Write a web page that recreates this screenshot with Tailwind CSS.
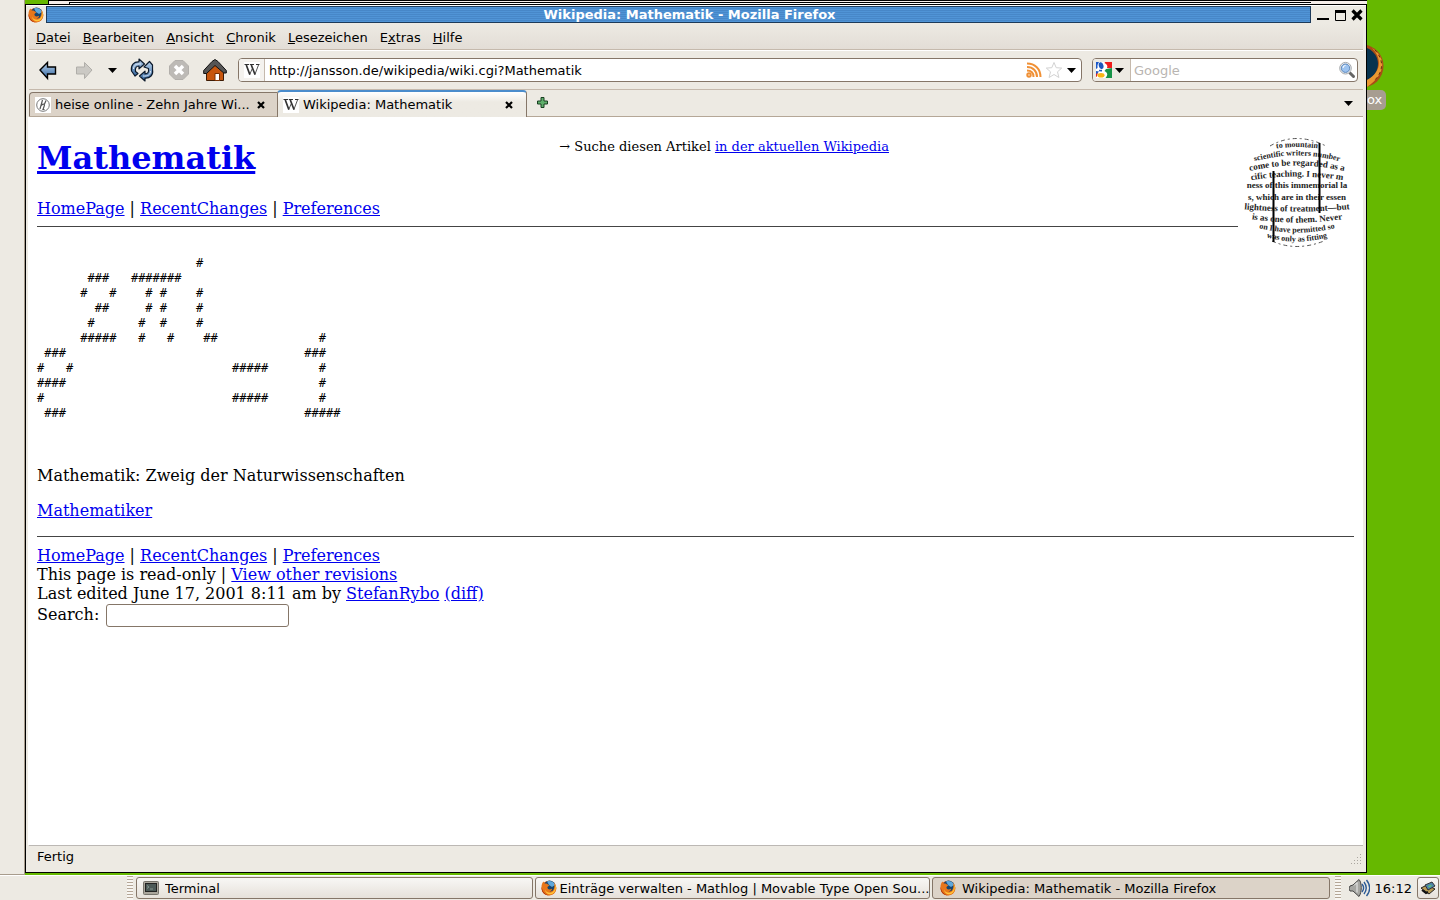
<!DOCTYPE html>
<html lang="de">
<head>
<meta charset="utf-8">
<title>Wikipedia: Mathematik - Mozilla Firefox</title>
<script src="https://cdn.jsdelivr.net/npm/@tailwindcss/browser@4"></script>
</head>
<body class="flex h-screen flex-col overflow-hidden bg-[#66b800] font-['DejaVu_Sans',sans-serif] text-[13px] leading-4 text-black">
<svg class="absolute h-0 w-0" aria-hidden="true">
  <symbol id="firefox" viewBox="0 0 16 16">
    <circle cx="8" cy="8" r="7.3" fill="#d9560f"/>
    <circle cx="8.6" cy="6.2" r="5.6" fill="#17456f"/>
    <path d="M6 1.400C9 .2 13 1.500 14 5L11 7 8 5z" fill="#5fa8dc"/>
    <path d="M1 4C1.500 2.500 2.300 2 2.600 1.600L3.400 3.600C5 3.200 6.500 3.800 7 4.600L8.400 5.300 6.500 7C6 9.500 9 10.200 10.600 8.700C11.600 9 10.800 11 8.500 11.600C12 12 14 8.500 13.300 3.500C15.800 6 16 10 13.500 13C10.500 16.400 4.500 16.200 1.900 12.400C.2 9.800.3 6.500 1 4z" fill="#e8761a"/>
    <path d="M13.300 3.500C14.600 6.500 14 10 11.500 12C9 13.700 5 12.500 4.300 9.500C4 12.500 7 14.600 10 14.200C14.500 13.300 16.300 7 13.300 3.500z" fill="#ffc33b"/>
    <path d="M1 4C.2 8 1.500 13.500 7.500 15.300C4 15.300 1 12.500.6 9z" fill="#a62a0c"/>
  </symbol>
  <symbol id="wiki" viewBox="0 0 16 16">
    <rect width="16" height="16" fill="#fff"/>
    <path d="M.5 2.500h4.700M6 2.500h4M12 2.500h3.500" stroke="#333"/>
    <path d="M5.500 13L8.300 6.500M10.700 13L14.500 3" stroke="#555" fill="none"/>
    <path d="M2.300 3l3.500 9.500M7.300 3l3.700 9.500" stroke="#333" stroke-width="1.700" fill="none"/>
  </symbol>
  <symbol id="down" viewBox="0 0 9 5"><path d="M0 0h9L4.500 5z" fill="#000"/></symbol>
  <symbol id="close" viewBox="0 0 8 8"><path d="M1 1l6 6M7 1L1 7" stroke="#000" stroke-width="2.200"/></symbol>
  <linearGradient id="blue" x1="0" y1="0" x2="0" y2="1"><stop offset="0" stop-color="#b9d2ec"/><stop offset="1" stop-color="#31659f"/></linearGradient>
</svg>

<div class="flex min-h-0 flex-1">
  <div class="w-[25px] shrink-0 border-r border-b border-[#a89c8c] bg-[#edeae3]"></div>

  <div class="mb-[2px] flex min-w-0 flex-1 flex-col">
    <!-- edge of the window behind -->
    <div class="flex h-1 shrink-0">
      <div class="w-[23px]"></div>
      <div class="flex flex-1 border-t border-l border-black bg-[#f6eeea]">
        <div class="mt-px ml-5 flex-1 border-t border-l border-black bg-white"></div>
        <div class="w-14"></div>
      </div>
    </div>

    <main class="flex min-h-0 flex-1 flex-col border border-black bg-[#edeae3]">
      <header class="flex h-[18px] shrink-0 items-center border-t border-white pr-[3px] pl-[2px]">
        <svg class="h-4 w-4 shrink-0"><use href="#firefox"/></svg>
        <div class="ml-[2px] h-[17px] flex-1 border border-[#1d3a5a] bg-[repeating-linear-gradient(#5094d6_0_1px,#4787c8_1px_2px)] pl-[22px] text-center leading-[15px] font-bold text-white">Wikipedia: Mathematik - Mozilla Firefox</div>
        <div class="ml-[6px] flex items-center gap-[5px]">
          <button aria-label="Minimieren"><svg class="block h-3 w-3" viewBox="0 0 12 12"><path d="M0 10h12" stroke="#000" stroke-width="2"/></svg></button>
          <button aria-label="Maximieren"><svg class="block h-3 w-3" viewBox="0 0 12 12"><path d="M1.500 2v9.500h10V2" stroke="#000" fill="none"/><path d="M1 2.500h11" stroke="#000" stroke-width="3"/></svg></button>
          <button aria-label="Schließen"><svg class="block h-3 w-3" viewBox="0 0 12 12"><path d="M1.500 1.500l9 9M10.500 1.500l-9 9" stroke="#000" stroke-width="3.200"/></svg></button>
        </div>
      </header>

      <nav class="mx-[3px] flex h-[27px] shrink-0 items-center gap-3 border-b border-[#c5b9ac] bg-linear-to-b from-[#edeae3] to-[#e3ddd6] pt-1 pl-[7px]">
        <button><u>D</u>atei</button><button><u>B</u>earbeiten</button><button><u>A</u>nsicht</button><button><u>C</u>hronik</button><button><u>L</u>esezeichen</button><button>E<u>x</u>tras</button><button><u>H</u>ilfe</button>
      </nav>

      <div class="mx-[3px] flex h-10 shrink-0 items-center border-t border-b border-t-white border-b-[#c5b9ac] pr-[5px] pl-[7px]">
        <button aria-label="Zurück"><svg class="block h-6 w-6" viewBox="0 0 24 24"><path d="M4 12L11.500 4.500V9h8v7h-8v4.500z" fill="url(#blue)" stroke="#000" stroke-width="1.400"/></svg></button>
        <button class="ml-3" aria-label="Vor"><svg class="block h-6 w-6" viewBox="0 0 24 24"><path d="M20 12L12.500 4.500V9H4.500v7h8v4.500z" fill="#cbc9c4" stroke="#b0aea9"/></svg></button>
        <button class="ml-3" aria-label="Verlauf"><svg class="block h-[5px] w-[9px]"><use href="#down"/></svg></button>
        <button class="ml-[13px]" aria-label="Neu laden"><svg class="block h-6 w-6" viewBox="0 0 24 24"><g fill="url(#blue)" stroke="#0c1a2c" stroke-width="1.200" stroke-linejoin="round"><path d="M1.500 13C.5 7 4 3.500 9 3.800V1l5.500 5L9 10.800V8C6 8 5 10 5.500 13.500L8 15.500 5 18z"/><path d="M22.500 11.500C23.500 17 20 20.500 15 20.200V23l-5.500-5L15 13.200V16C18 16 19 14 18.500 10.500L14 9l5.500-5.500L22.500 7z"/></g><path d="M3.500 11C3.500 7.500 6 5.500 11 6M20.500 13c0 3.500-2.500 5.500-7.500 5" stroke="#dfeaf7" fill="none"/></svg></button>
        <button class="ml-[13px]" aria-label="Stopp"><svg class="block h-6 w-6" viewBox="0 0 24 24"><path d="M8 2.500h8L21.500 8v8L16 21.500H8L2.500 16V8z" fill="#bdbab6" stroke="#b2afab"/><path d="M8 8l8 8M16 8l-8 8" stroke="#fff" stroke-width="3.500"/></svg></button>
        <button class="ml-3" aria-label="Startseite"><svg class="block h-6 w-6" viewBox="0 0 24 24"><path d="M3.500 13L12 6l8.500 7v9.500h-17z" fill="#c7560e" stroke="#3d1b05"/><path d="M.7 12.500L9 3.500l3-2 3 2 8.300 9V15h-2.500L12 7.500 3.500 15.500H.7z" fill="#555" stroke="#111"/><path d="M12 15.500h4.500v7H12z" fill="#fff" stroke="#7a3205"/></svg></button>

        <div class="ml-[11px] flex h-6 min-w-0 flex-1 items-center rounded-[4px] border border-[#857668] bg-white pr-[5px]">
          <span class="flex h-full w-[26px] items-center justify-end rounded-l-[3px] border-r border-[#c5b9ac] bg-[#f4f2ee] pr-1"><svg class="h-4 w-4"><use href="#wiki"/></svg></span>
          <input aria-label="Adresse" class="min-w-0 flex-1 pt-px pl-1 outline-none" value="http://jansson.de/wikipedia/wiki.cgi?Mathematik">
          <svg class="h-4 w-4" viewBox="0 0 16 16" fill="none" stroke="#f09035" stroke-width="2"><circle cx="3" cy="13" r="1.700"/><path d="M1 8.500c4 0 6.500 2.500 6.500 6.500M1 5c6 0 10 4 10 10M1 1.500c8 0 13.500 5.500 13.500 13.500"/></svg>
          <svg class="ml-[3px] h-[18px] w-[18px]" viewBox="0 0 18 18"><path d="M9 1.500l2.200 5.200 5.500.4-4.200 3.700 1.400 5.700L9 13.500l-4.900 3 1.400-5.700L1.300 7.100l5.500-.4z" fill="#fff" stroke="#d2d2d2"/></svg>
          <button class="ml-1" aria-label="Adressliste"><svg class="block h-[5px] w-[9px]"><use href="#down"/></svg></button>
        </div>

        <div class="ml-[10px] flex h-6 w-[266px] items-center rounded-[4px] border border-[#857668] bg-white pr-[1px]">
          <button aria-label="Suchmaschine" class="flex h-full w-[38px] items-center gap-[3px] rounded-l-[3px] border-r border-[#c5b9ac] bg-[#edeae3] pl-[3px]">
            <svg class="h-4 w-4" viewBox="0 0 16 16"><rect width="16" height="16" fill="#fff"/><path d="M9 0h7v6h-5C12 4 11 2 8.500 1z" fill="#ee1c1c"/><path d="M10 7l6-1v10H9.500C12 13 12 11 8.500 9z" fill="#169347"/><path d="M0 0h3L1.500 3v3L0 7zM0 9l3 .5L1 12H0z" fill="#1c58c8"/><path d="M0 12l2-1-1.500 4H0z" fill="#e02020"/><ellipse cx="5.200" cy="3.700" rx="2.300" ry="3.500" transform="rotate(-15 5 4)" fill="#1b57bd"/><path d="M3 8.500l3 .3" stroke="#1b57bd" stroke-width="1.500"/><ellipse cx="5" cy="13.200" rx="3.500" ry="2.300" fill="#f8b415"/></svg>
            <svg class="h-[5px] w-[9px]"><use href="#down"/></svg>
          </button>
          <input aria-label="Suche" placeholder="Google" class="min-w-0 flex-1 pt-px pl-[3px] outline-none placeholder:text-[#b9b5b1]">
          <button aria-label="Suchen"><svg class="block h-[18px] w-[18px]" viewBox="0 0 18 18"><path d="M12 12l3.500 3.500" stroke="#666" stroke-width="3" stroke-linecap="round"/><circle cx="7.500" cy="7.200" r="5.800" fill="#eef1f4" stroke="#a5a8ab"/><circle cx="7.500" cy="7.200" r="4.200" fill="#9cc3f0" stroke="#5d87ba"/><path d="M5 7a2.500 2.500 0 0 1 2.500-2.500" stroke="#fff" fill="none"/></svg></button>
        </div>
      </div>

      <div class="mx-[3px] flex h-[27px] shrink-0 items-end border-b border-[#b5a797]">
        <div class="flex h-6 w-[248px] items-center rounded-tl-[4px] border-t border-l border-[#857668] bg-[#dcd3c8] pt-px pr-3 pl-[5px]">
          <svg class="h-4 w-4" viewBox="0 0 16 16"><rect width="16" height="16" fill="#fff"/><circle cx="8" cy="8" r="6.300" fill="none" stroke="#777"/><path d="M7.500 3L5 12M6.200 8.500c2.300-2 3.800-1.500 3 .5L8 12.500h1.500M11 3.500L9.500 7" stroke="#555" fill="none" stroke-width="1.200"/></svg>
          <button class="ml-1 flex-1 truncate text-left">heise online - Zehn Jahre Wi...</button>
          <button aria-label="Tab schließen"><svg class="block h-2 w-2"><use href="#close"/></svg></button>
        </div>
        <div class="-mb-px flex h-[27px] w-[250px] items-center rounded-t-[4px] border-x border-t-2 border-x-[#857668] border-t-[#4a8ccc] bg-linear-to-b from-white to-[#edeae3] to-40% pr-[13px] pl-[5px]">
          <svg class="h-4 w-4"><use href="#wiki"/></svg>
          <button class="ml-1 flex-1 text-left">Wikipedia: Mathematik</button>
          <button aria-label="Tab schließen"><svg class="block h-2 w-2"><use href="#close"/></svg></button>
        </div>
        <button class="mb-2 ml-[10px]" aria-label="Neuer Tab"><svg class="block h-[11px] w-[11px]" viewBox="0 0 11 11"><path d="M4 .5h3V4h3.500v3H7v3.500H4V7H.5V4H4z" fill="#5fae6b" stroke="#183f20"/></svg></button>
        <button class="mr-[10px] mb-[10px] ml-auto" aria-label="Alle Tabs"><svg class="block h-[5px] w-[9px]"><use href="#down"/></svg></button>
      </div>

      <article class="mr-[3px] ml-[2px] min-h-0 flex-1 overflow-hidden bg-white px-[9px] pt-[18px] font-['DejaVu_Serif',serif] text-[16px] leading-[19px]">
        <div class="flex items-start">
          <div class="min-w-0 flex-1">
            <div class="flex items-start pt-1">
              <h1 class="text-[32px] leading-[38px] font-bold"><a href="#" class="text-[#0000ee] underline">Mathematik</a></h1>
              <p class="ml-[304px] text-[13px] leading-4">→ Suche diesen Artikel <a href="#" class="text-[#0000ee] underline">in der aktuellen Wikipedia</a></p>
            </div>
            <p class="mt-[22px]"><a href="#" class="text-[#0000ee] underline">HomePage</a> | <a href="#" class="text-[#0000ee] underline">RecentChanges</a> | <a href="#" class="text-[#0000ee] underline">Preferences</a></p>
            <hr class="mt-2 border-[#444]">
          </div>
          <svg class="h-[116px] w-[116px] shrink-0" viewBox="0 0 116 116" font-family="Liberation Serif, serif" font-size="9" font-weight="bold" text-anchor="middle" fill="#222">
            <defs>
              <path id="c1" d="M20 17Q59 7 98 17"/><path id="c2" d="M2 31Q59 10 116 31"/><path id="c3" d="M-6 41Q59 20 124 41"/><path id="c4" d="M-6 49Q59 34 124 49"/>
              <path id="c7" d="M-6 73Q59 80 124 73"/><path id="c8" d="M-6 81Q59 94 124 81"/><path id="c9" d="M2 88Q59 107 116 88"/><path id="c10" d="M10 96Q59 117 108 96"/>
            </defs>
            <text font-size="8"><textPath href="#c1" startOffset="50%">to mountain</textPath></text>
            <text font-size="8"><textPath href="#c2" startOffset="50%">scientific writers number</textPath></text>
            <text><textPath href="#c3" startOffset="50%">come to be regarded as a</textPath></text>
            <text><textPath href="#c4" startOffset="50%">cific teaching. I never m</textPath></text>
            <text x="59" y="53">ness of this immemorial la</text>
            <text x="59" y="65">s, which are in their essen</text>
            <text><textPath href="#c7" startOffset="50%">lightness of treatment—but</textPath></text>
            <text><textPath href="#c8" startOffset="50%">is as one of them. Never</textPath></text>
            <text font-size="8"><textPath href="#c9" startOffset="50%">on I have permitted so</textPath></text>
            <text font-size="8"><textPath href="#c10" startOffset="50%">was only as fitting</textPath></text>
            <path d="M32 11Q58-4 88 11M34 106Q58 117 86 106" fill="none" stroke="#555" stroke-dasharray="4 3 2 3"/>
            <path d="M35.500 36v71M81.500 8v70" stroke="#000" stroke-width="2"/>
          </svg>
        </div>
<pre class="mt-[5px] font-['DejaVu_Sans_Mono',monospace] text-[12px] leading-[15px]">
                      #
       ###   #######
      #   #    # #    #
        ##     # #    #
       #      #  #    #
      #####   #   #    ##              #
 ###                                 ###
#   #                      #####       #
####                                   #
#                          #####       #
 ###                                 #####
</pre>
        <p class="mt-[45px]">Mathematik: Zweig der Naturwissenschaften</p>
        <p class="mt-4"><a href="#" class="text-[#0000ee] underline">Mathematiker</a></p>
        <hr class="mt-4 mb-[9px] border-[#444]">
        <p><a href="#" class="text-[#0000ee] underline">HomePage</a> | <a href="#" class="text-[#0000ee] underline">RecentChanges</a> | <a href="#" class="text-[#0000ee] underline">Preferences</a></p>
        <p>This page is read-only | <a href="#" class="text-[#0000ee] underline">View other revisions</a></p>
        <p>Last edited June 17, 2001 8:11 am by <a href="#" class="text-[#0000ee] underline">StefanRybo</a> <a href="#" class="text-[#0000ee] underline">(diff)</a></p>
        <p class="flex items-center"><label for="q" class="pb-px">Search:</label><input id="q" class="mt-px ml-[7px] h-[23px] w-[183px] rounded-[3px] border border-[#857668] bg-white px-1 text-[13px]"></p>
      </article>

      <footer class="mx-[3px] flex h-[27px] shrink-0 items-end justify-between border-t border-[#bcb8b4] pb-[7px] pl-2">
        <span>Fertig</span>
        <svg class="-mb-[1px] h-3 w-3" viewBox="0 0 12 12" stroke="#aaa69f" stroke-dasharray="1 2"><path d="M9 .5h3M9 3.500h3M6 3.500h3M3 6.500h9M3 9.500h9M0 9.500h3"/></svg>
      </footer>
    </main>
  </div>

  <aside class="w-[73px] shrink-0 overflow-hidden">
    <svg class="mt-11 block h-11 w-[18px]" viewBox="0 0 18 44"><circle cx="-5" cy="22" r="21.500" fill="#a94c16"/><circle cx="-6" cy="20" r="17" fill="#07334f"/><path d="M5 4C19 13 20 29 0 43V36C16 27 14 13 5 4z" fill="#e89831"/><path d="M8 6C17 16 17 27 7 37" stroke="#64310d" stroke-dasharray="3 3" fill="none"/></svg>
    <div class="mt-[2px] h-5 w-[19px] rounded-r-[5px] bg-[#a79d91] leading-[19px] text-white">ox</div>
  </aside>
</div>

<footer class="flex h-[25px] shrink-0 items-center border-t border-white bg-[#edeae3] pr-px">
  <div class="ml-[127px] h-6 w-[6px] bg-[repeating-linear-gradient(#b5a797_0_1px,#f8f6f2_1px_3px)]"></div>
  <div class="mr-px ml-[3px] flex min-w-0 flex-1 gap-[2px]">
    <button class="flex h-[22px] min-w-0 flex-1 items-center rounded-[3px] border border-[#857668] bg-linear-to-b from-[#f8f7f5] to-[#e6e1da] pl-[6px]">
      <svg class="h-4 w-4 shrink-0" viewBox="0 0 16 16"><rect x=".5" y="1.500" width="15" height="13" rx="1" fill="#aaa69c" stroke="#77746c"/><rect x="2.500" y="3.500" width="11" height="8" fill="#4c5957" stroke="#222"/><path d="M4 5.500l2 1.500-2 1.500M7 9h3" stroke="#82958f" fill="none"/></svg>
      <span class="ml-[6px] truncate pt-px">Terminal</span>
    </button>
    <button class="flex h-[22px] min-w-0 flex-1 items-center rounded-[3px] border border-[#857668] bg-linear-to-b from-[#f8f7f5] to-[#e6e1da] pl-[5px]">
      <svg class="h-4 w-4 shrink-0"><use href="#firefox"/></svg>
      <span class="ml-[3px] pt-px whitespace-nowrap">Einträge verwalten - Mathlog | Movable Type Open Sou...</span>
    </button>
    <button class="flex h-[22px] min-w-0 flex-1 items-center rounded-[3px] border border-[#857668] bg-[#dcd3c8] pl-[7px]">
      <svg class="h-4 w-4 shrink-0"><use href="#firefox"/></svg>
      <span class="ml-[6px] truncate pt-[2px]">Wikipedia: Mathematik - Mozilla Firefox</span>
    </button>
  </div>
  <div class="ml-1 h-6 w-[6px] bg-[repeating-linear-gradient(#b5a797_0_1px,#f8f6f2_1px_3px)]"></div>
  <svg class="ml-2 h-5 w-[21px]" viewBox="0 0 21 20"><path d="M1 8l3-1 6-5.500c3 3 3 13 0 17L4 13H1C0 11.500 0 9.500 1 8z" fill="#a6a6a2" stroke="#444"/><path d="M5 7.500l3-3v10" stroke="#eee" fill="none"/><path d="M13 6c2 2.500 2 5.500 0 8M15 4c3 4 3 8 0 12M17.500 2c4 5 4 11 0 16" stroke="#2d5b96" stroke-width="1.400" fill="none"/></svg>
  <time class="ml-[5px] pt-px">16:12</time>
  <button aria-label="Desktop anzeigen" class="ml-[5px] flex h-[22px] w-[22px] items-center justify-center rounded-[3px] border border-[#857668] bg-linear-to-b from-[#f8f7f5] to-[#e6e1da]">
    <svg class="h-4 w-4" viewBox="0 0 16 16"><path d="M1 8l6-3 8 4-6 5z" fill="#b89b56" stroke="#222"/><path d="M5 5l7-3 3 4-7 4z" fill="#4e86a8" stroke="#333"/><path d="M2 10l4 3 2-1" stroke="#111" stroke-width="2" fill="none"/><path d="M8 6l3-1 1 1-3 1.500z" fill="#5fc377"/></svg>
  </button>
</footer>
</body>
</html>
